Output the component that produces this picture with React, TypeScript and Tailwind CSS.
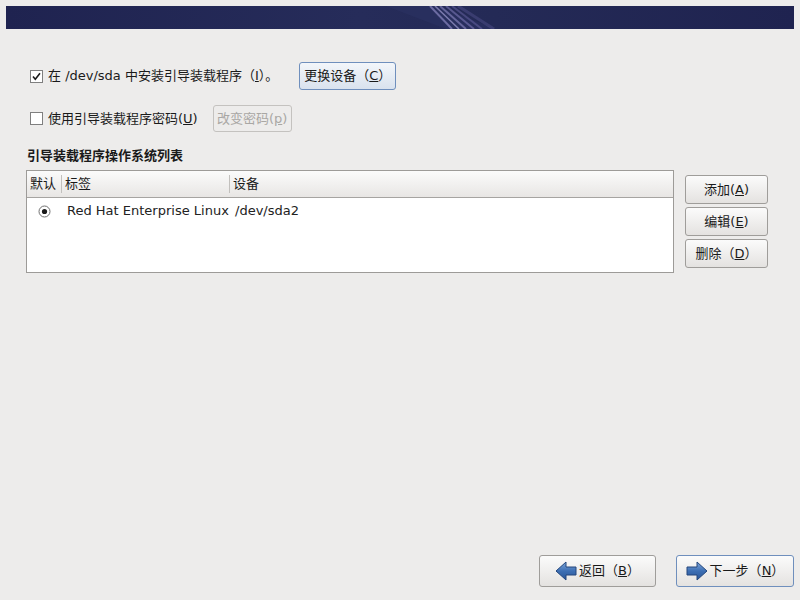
import React from "react";

const font = "font-['DejaVu_Sans','Noto_Sans_CJK_SC',sans-serif]";

function Banner() {
  return (
    <div className="mx-[6px] mt-[6px] h-[23px] bg-[#1f2350] overflow-hidden">
      <svg width="788" height="23" viewBox="0 0 788 23" className="block">
        <defs>
          <linearGradient id="bg" x1="0" x2="1" y1="0" y2="0">
            <stop offset="0" stopColor="#1f2350" />
            <stop offset="0.45" stopColor="#262c5a" />
            <stop offset="0.62" stopColor="#242a56" />
            <stop offset="1" stopColor="#1f2350" />
          </linearGradient>
        </defs>
        <rect width="788" height="23" fill="url(#bg)" />
        <path d="M380 0 L430 0 L490 23 L440 23 Z" fill="#2c3262" opacity="0.6" />
        <path d="M424 0 L446 23" stroke="#8a86c0" strokeWidth="2" opacity="0.7" />
        <path d="M429 0 L453 23" stroke="#a09cd0" strokeWidth="1.5" opacity="0.7" />
        <path d="M434 0 L460 23" stroke="#8e8ac4" strokeWidth="2" opacity="0.6" />
        <path d="M440 0 L468 23" stroke="#7a76b4" strokeWidth="2" opacity="0.6" />
        <path d="M446 0 L476 23" stroke="#6a66a6" strokeWidth="2" opacity="0.5" />
        <path d="M452 0 L488 23" stroke="#5a5896" strokeWidth="3" opacity="0.4" />
      </svg>
    </div>
  );
}

function Checkbox({ checked }: { checked: boolean }) {
  return (
    <svg width="13" height="13" viewBox="0 0 13 13" className="block shrink-0">
      <rect x="0.5" y="0.5" width="12" height="12" fill="#ffffff" stroke="#7f7f7f" />
      {checked && (
        <path d="M3 6.5 L5.3 9.2 L10 3.2" fill="none" stroke="#1a1a1a" strokeWidth="1.6" />
      )}
    </svg>
  );
}

function Btn({
  children,
  className = "",
  focus = false,
  disabled = false,
}: {
  children: React.ReactNode;
  className?: string;
  focus?: boolean;
  disabled?: boolean;
}) {
  const look = disabled
    ? "border-[#c4c2bf] bg-[#edeceb] text-[#a9a7a4]"
    : focus
    ? "border-[#6f8fbd] bg-[linear-gradient(#f3f6fa,#d9e2ee)] text-[#1a1a1a]"
    : "border-[#9f9d9a] bg-[linear-gradient(#fbfbfb,#e4e2e0)] text-[#1a1a1a]";
  return (
    <div
      className={`flex items-center justify-center rounded-[3px] border text-[13px] ${look} ${className}`}
    >
      {children}
    </div>
  );
}

function Arrow({ dir }: { dir: "left" | "right" }) {
  const d =
    dir === "left"
      ? "M1 10 L11 1 L11 6 L21 6 L21 14 L11 14 L11 19 Z"
      : "M21 10 L11 1 L11 6 L1 6 L1 14 L11 14 L11 19 Z";
  return (
    <svg width="22" height="20" viewBox="0 0 22 20" className="block">
      <defs>
        <linearGradient id={`ar-${dir}`} x1="0" x2="0" y1="0" y2="1">
          <stop offset="0" stopColor="#7ea6da" />
          <stop offset="0.5" stopColor="#3d6fb4" />
          <stop offset="1" stopColor="#2a5596" />
        </linearGradient>
      </defs>
      <path d={d} fill={`url(#ar-${dir})`} stroke="#24477d" strokeWidth="1" strokeLinejoin="round" />
    </svg>
  );
}

export default function App() {
  return (
    <div className={`w-[800px] h-[600px] bg-[#edeceb] text-[#1a1a1a] flex flex-col ${font}`}>
      <Banner />

      <div className="flex items-center mt-[33px] pl-[30px] h-[28px]">
        <Checkbox checked />
        <span className="ml-[5px] text-[13px]">
          在 /dev/sda 中安装引导装载程序（<u>I</u>）。
        </span>
        <Btn focus className="ml-[21px] w-[97px] h-[28px]">
          更换设备（<u>C</u>）
        </Btn>
      </div>

      <div className="flex items-center mt-[15px] pl-[30px] h-[27px]">
        <Checkbox checked={false} />
        <span className="ml-[5px] text-[13px]">
          使用引导装载程序密码(<u>U</u>)
        </span>
        <Btn disabled className="ml-[15px] w-[79px] h-[27px]">
          改变密码(<u>p</u>)
        </Btn>
      </div>

      <div className="mt-[15px] pl-[27px] text-[13px] font-bold h-[18px] leading-[18px]">
        引导装载程序操作系统列表
      </div>

      <div className="flex mt-[5px] pl-[26px]">
        <div className="w-[648px] h-[103px] border border-[#9d9b98] bg-white flex flex-col">
          <div className="h-[27px] flex items-center border-b border-[#a6a4a1] bg-[linear-gradient(#fbfbfb,#e8e6e4)] text-[13px]">
            <div className="w-[35px] pl-[3px] border-r border-[#c2c0bd] h-[18px] leading-[18px]">默认</div>
            <div className="w-[168px] pl-[3px] border-r border-[#c2c0bd] h-[18px] leading-[18px]">标签</div>
            <div className="pl-[3px] h-[18px] leading-[18px]">设备</div>
          </div>
          <div className="h-[26px] flex items-center text-[13px] text-[#222]">
            <div className="w-[36px] flex pl-[11px]">
              <svg width="13" height="13" viewBox="0 0 13 13" className="block">
                <circle cx="6.5" cy="6.5" r="5.5" fill="#fff" stroke="#6f6f6f" />
                <circle cx="6.5" cy="6.5" r="2.6" fill="#1a1a1a" />
              </svg>
            </div>
            <div className="w-[168px] pl-[4px]">Red Hat Enterprise Linux</div>
            <div className="pl-[4px]">/dev/sda2</div>
          </div>
        </div>

        <div className="ml-[11px] mt-[5px] flex flex-col gap-[3px]">
          <Btn className="w-[83px] h-[29px]">
            添加(<u>A</u>)
          </Btn>
          <Btn className="w-[83px] h-[29px]">
            编辑(<u>E</u>)
          </Btn>
          <Btn className="w-[83px] h-[29px]">
            删除（<u>D</u>）
          </Btn>
        </div>
      </div>

      <div className="mt-auto mb-[13px] flex justify-end pr-[6px] gap-[20px]">
        <Btn className="w-[117px] h-[32px] gap-[2px]">
          <Arrow dir="left" />
          <span>
            返回（<u>B</u>）
          </span>
        </Btn>
        <Btn focus className="w-[118px] h-[32px] gap-[2px] !bg-[linear-gradient(#fbfbfb,#e4e2e0)]">
          <Arrow dir="right" />
          <span>
            下一步（<u>N</u>）
          </span>
        </Btn>
      </div>
    </div>
  );
}
